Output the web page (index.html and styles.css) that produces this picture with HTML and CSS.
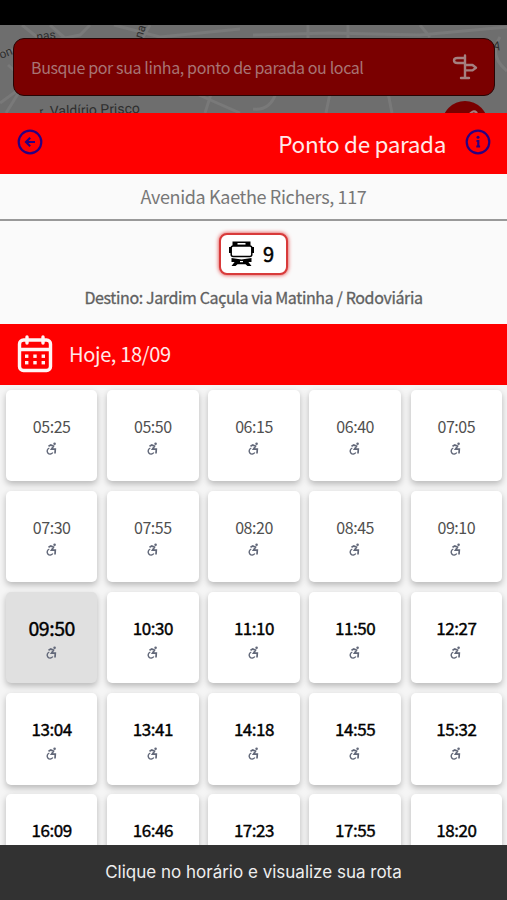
FILE: index.html
```html
<!DOCTYPE html>
<html lang="pt-BR">

<head>
    <meta charset="UTF-8">
    <meta name="viewport" content="width=device-width, initial-scale=1.0">
    <title>Ponto de parada</title>
    <link rel="stylesheet" href="styles.css">
</head>

<body>
    <div class="status-bar"></div>

    <div class="map">
        <svg class="map-roads" viewBox="0 0 507 88" aria-hidden="true">
            <g class="roads">
                <path d="M0 28 L40 18 L80 10 L90 0 M22 0 L42 16 M50 0 L66 14 M0 78 L22 62 L60 70 M6 88 L26 56 L8 40 M114 0 L160 12 L240 4 M150 0 L142 14 M190 66 L240 88 M205 88 L212 66" />
                <path d="M253 10 L330 8 L420 10 L507 2 M308 0 V14 M348 0 V14 M330 68 L326 88 M388 68 L392 88 M253 84 Q270 86 276 68 M500 12 Q488 30 507 46 M420 0 L430 12" />
            </g>
            <text x="1" y="34" transform="rotate(-22 1 34)" class="road-name">on</text>
            <text x="37" y="16" transform="rotate(-8 37 16)" class="road-name">nas</text>
            <text x="142" y="14" transform="rotate(-72 142 14)" class="road-name">na</text>
            <text x="492" y="24" transform="rotate(12 492 24)" class="road-name">A</text>
            <text x="40" y="91" transform="rotate(-8 40 91)" class="road-name">r.</text>
            <text x="50" y="91" transform="rotate(-2 50 91)" class="road-name big">Valdírio Prisco</text>
        </svg>
        <div class="search">
            <span>Busque por sua linha, ponto de parada ou local</span>
            <svg class="sign-icon" viewBox="0 0 26 26">
                <path d="M13 1.500v22M9 24h8M13 4H5.500Q2 4 2 6.500T5.500 9H13M13 11h7.500l3.500 2.700-3.500 2.700H13" />
            </svg>
        </div>
        <div class="round-button">
            <svg viewBox="0 0 44 44"><path d="M26 13q4-5 7-2l-2 5" /></svg>
        </div>
    </div>

    <div class="title-bar">
        <svg class="circle-icon" viewBox="0 0 26 26">
            <circle cx="13" cy="13" r="11.300" />
            <path d="M18 13H9.500M13.200 8.800L9 13l4.200 4.200" />
        </svg>
        <h1>Ponto de parada</h1>
        <svg class="circle-icon" viewBox="0 0 26 26">
            <circle cx="13" cy="13" r="11.300" />
            <path d="M11.500 12h1.800v5.200M11.300 17.500h3.800" />
            <circle class="dot" cx="13" cy="8.300" r="1.500" />
        </svg>
    </div>

    <div class="address">Avenida Kaethe Richers, 117</div>

    <div class="line-info">
        <div class="line-badge">
            <svg class="bus-icon" viewBox="0 0 25 26">
                <path d="M3.500 0.500h18v5h-18z" />
                <rect class="window" x="2.200" y="5" width="20.600" height="10.500" rx="2" />
                <path d="M0 6h2v6H0zM23 6h2v6h-2zM2.500 17l10 1.500 10-1.500v4h-20zM6 20.500h13l3.500 4.500h-4l-2-1.800h-8L6.500 25h-4z" />
                <path class="light" d="M8.500 2h8v1.600h-8z" />
                <path class="light" d="M11 20h3v1.200h-3z" />
            </svg>
            <span>9</span>
        </div>
        <p>Destino: Jardim Caçula via Matinha / Rodoviária</p>
    </div>

    <div class="date-bar">
        <svg class="calendar-icon" viewBox="0 0 36 38">
            <rect x="2.500" y="5" width="31" height="30.500" rx="4" />
            <path d="M10 2v6M26 2v6M3 14.500h30" />
            <g class="days">
                <rect x="8" y="19.500" width="3.400" height="3.400" />
                <rect x="16.300" y="19.500" width="3.400" height="3.400" />
                <rect x="24.600" y="19.500" width="3.400" height="3.400" />
                <rect x="8" y="26" width="3.400" height="3.400" />
                <rect x="16.300" y="26" width="3.400" height="3.400" />
                <rect x="24.600" y="26" width="3.400" height="3.400" />
            </g>
        </svg>
        <span>Hoje, 18/09</span>
    </div>

    <div class="times" id="times"></div>

    <div class="hint">Clique no horário e visualize sua rota</div>

    <script>
        const times = [
            '05:25', '05:50', '06:15', '06:40', '07:05',
            '07:30', '07:55', '08:20', '08:45', '09:10',
            '09:50', '10:30', '11:10', '11:50', '12:27',
            '13:04', '13:41', '14:18', '14:55', '15:32',
            '16:09', '16:46', '17:23', '17:55', '18:20'
        ];
        const next = '09:50';

        const wheelchair = `<svg class="wheelchair" viewBox="0 0 12 13">
            <circle class="head" cx="8.600" cy="1.700" r="1.300" />
            <path d="M2.500 4.300L4.800 3L7.500 4.200L5.500 7.200H9.300L9 11.500" />
            <path class="wheel" d="M3.300 6.200A3 3 0 1 0 6.800 10.500" />
        </svg>`;

        document.getElementById('times').innerHTML = times.map(time => {
            let state = '';
            if (time > next) state = 'coming';
            if (time === next) state = 'coming next';
            return `<div class="time ${state}"><span>${time}</span>${wheelchair}</div>`;
        }).join('');
    </script>
</body>

</html>
```

FILE: styles.css
```css
* {
    box-sizing: border-box;
}

body {
    margin: 0;
    height: 900px;
    display: flex;
    flex-direction: column;
    overflow: hidden;
    background-color: #f5f5f5;
    font-family: "Noto Sans CJK SC", "Noto Sans", sans-serif;
}

svg {
    display: block;
    flex: none;
}

.status-bar {
    flex: none;
    height: 25px;
    background-color: #000;
}

/* Map with the search box, dimmed behind the sheet */
.map {
    position: relative;
    flex: none;
    height: 88px;
    padding: 13px 12px 0 13px;
    background-color: #6e6e6e;
    overflow: hidden;
}

.map-roads {
    position: absolute;
    top: 0;
    left: 0;
    width: 507px;
    height: 88px;
}

.roads {
    fill: none;
    stroke: #797979;
    stroke-width: 3;
}

.road-name {
    font-family: Roboto, sans-serif;
    font-size: 12px;
    fill: #2e2e2e;
}

.road-name.big {
    font-size: 14px;
}

.search {
    position: relative;
    display: flex;
    align-items: center;
    justify-content: space-between;
    height: 58px;
    padding: 0 16px 0 17px;
    border: 1px solid #270505;
    border-radius: 11px;
    background-color: #7a0000;
    color: #a87474;
    font-size: 16px;
    letter-spacing: -0.38px;
}

.sign-icon {
    width: 26px;
    height: 26px;
    fill: none;
    stroke: #a58080;
    stroke-width: 2.4;
    stroke-linejoin: round;
    stroke-linecap: round;
}

.round-button {
    position: absolute;
    top: 76px;
    right: 19px;
    width: 46px;
    height: 46px;
    border-radius: 50%;
    background-color: #7a0000;
}

.round-button svg {
    fill: none;
    stroke: #a58080;
    stroke-width: 2;
}

.title-bar {
    flex: none;
    display: flex;
    align-items: center;
    height: 61px;
    padding: 0 16px 3px 17px;
    background-color: #ff0000;
    color: #ffe9e9;
}

.title-bar h1 {
    margin: 1px 19px 0 auto;
    font-size: 22.5px;
    font-weight: 400;
    letter-spacing: -0.35px;
    line-height: 30px;
}

.circle-icon {
    width: 26px;
    height: 26px;
    fill: none;
    stroke: #2b0080;
    stroke-width: 2.2;
}

.circle-icon .dot {
    fill: #2b0080;
    stroke: none;
}

.address {
    flex: none;
    height: 47px;
    border-bottom: 2px solid #999;
    background-color: #fafafa;
    color: #777;
    font-size: 18px;
    letter-spacing: -0.35px;
    line-height: 44px;
    text-align: center;
}

.line-info {
    flex: none;
    display: flex;
    flex-direction: column;
    align-items: center;
    height: 102.6px;
    padding-top: 12px;
    background-color: #fafafa;
}

.line-badge {
    display: flex;
    align-items: center;
    justify-content: space-between;
    width: 69px;
    height: 42px;
    padding: 0 12px 0 8px;
    border: 2px solid #d83a3a;
    border-radius: 8px;
    box-shadow: 0 0 4px #e03030;
    background-color: #fff;
    color: #000;
    font-size: 20px;
    line-height: 36px;
    -webkit-text-stroke: 0.5px #000;
}

.bus-icon {
    width: 25px;
    height: 26px;
}

.bus-icon .window {
    fill: #fff;
    stroke: #000;
    stroke-width: 1.5;
}

.bus-icon .light {
    fill: #fff;
}

.line-info p {
    margin: 10px 0 0;
    color: #606060;
    font-size: 16px;
    letter-spacing: -0.37px;
    line-height: 24px;
    -webkit-text-stroke: 0.3px #606060;
}

.date-bar {
    flex: none;
    display: flex;
    align-items: center;
    height: 61px;
    padding-left: 17px;
    background-color: #ff0000;
    color: #ffe9e9;
    font-size: 20px;
    letter-spacing: -0.35px;
    line-height: 30px;
}

.date-bar span {
    margin-top: -1px;
}

.calendar-icon {
    width: 36px;
    height: 38px;
    margin-right: 16px;
    fill: none;
    stroke: #fff4f4;
    stroke-width: 3.4;
    stroke-linecap: round;
}

.calendar-icon .days {
    fill: #fff4f4;
    stroke: none;
}

.times {
    flex: 1;
    min-height: 0;
    display: grid;
    grid-template-columns: repeat(5, 1fr);
    grid-auto-rows: 91.4px;
    gap: 9.8px;
    padding: 5px 5px 0 6px;
    overflow: hidden;
}

.time {
    display: flex;
    flex-direction: column;
    align-items: center;
    padding-top: 24px;
    border-radius: 5px;
    background-color: #fff;
    box-shadow: 0 3px 6px rgba(0, 0, 0, 0.25);
    color: #505050;
    font-size: 16px;
    letter-spacing: -0.45px;
    line-height: 24px;
}

.time.coming {
    color: #000;
    font-size: 17px;
    -webkit-text-stroke: 0.4px #000;
}

.time.next {
    background-color: #e0e0e0;
    font-size: 19.5px;
}

.wheelchair {
    width: 12px;
    height: 13px;
    margin-top: 4px;
    fill: none;
    stroke: #626879;
    stroke-width: 1.7;
}

.coming .wheelchair {
    margin-top: 6px;
}

.wheelchair .head {
    fill: #626879;
    stroke: none;
}

.wheelchair .wheel {
    stroke-width: 1.4;
}

.hint {
    flex: none;
    height: 55px;
    background-color: #323232;
    color: #eee;
    font-family: Inter, sans-serif;
    font-size: 17px;
    line-height: 54px;
    text-align: center;
}
```
